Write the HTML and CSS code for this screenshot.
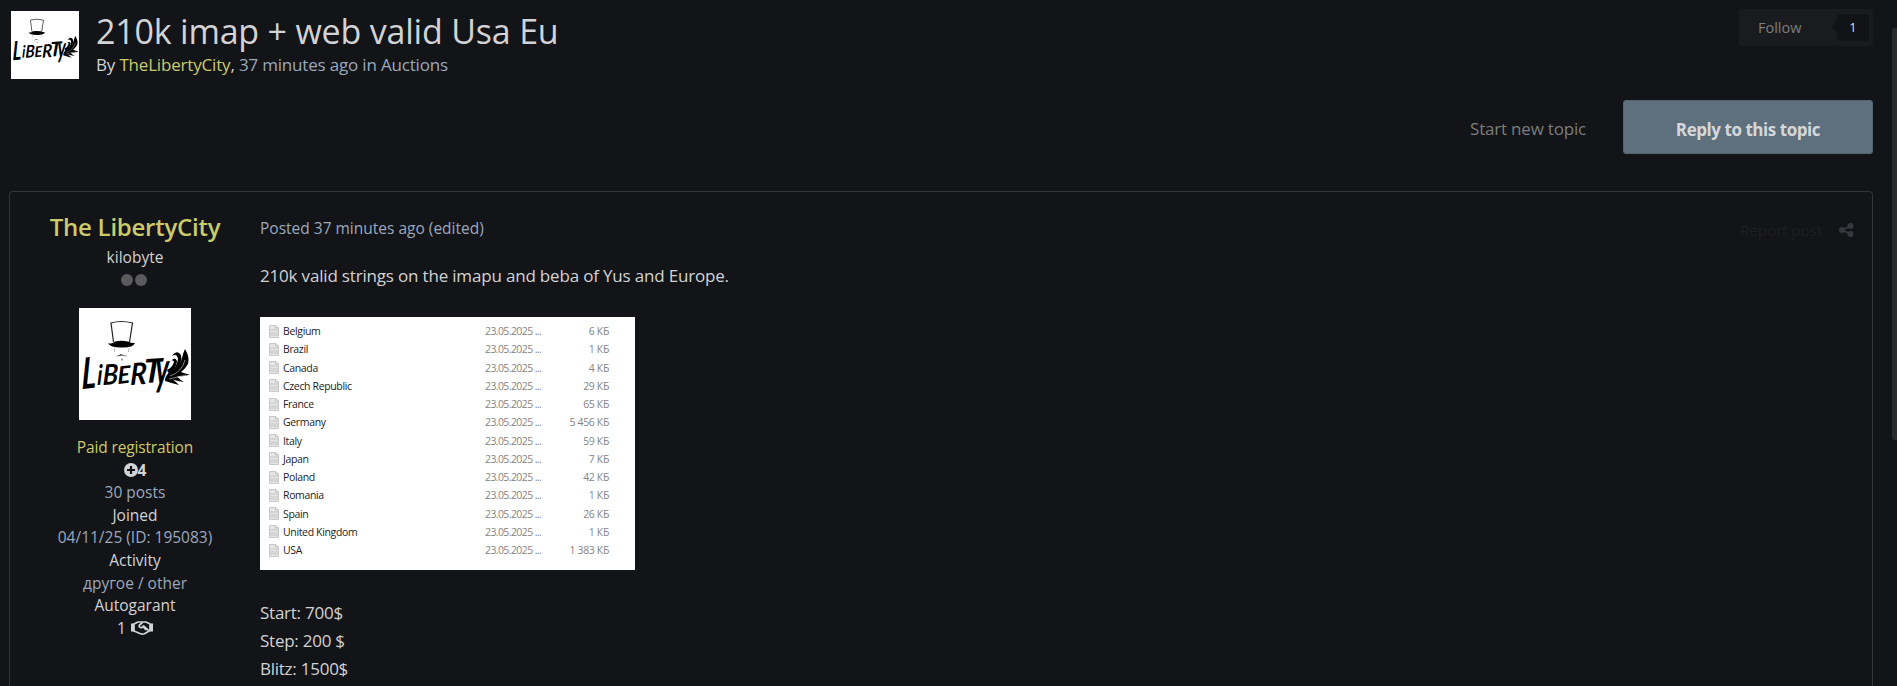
FILE: index.html
```
<!DOCTYPE html>
<html lang="en">
<head>
  <meta charset="UTF-8">
  <title>210k imap + web valid Usa Eu</title>
  <link rel="stylesheet" href="styles.css">
</head>
<body>
  <svg class="sprite" aria-hidden="true">
    <symbol id="logo" viewBox="0 0 112 112">
      <rect width="112" height="112" fill="#fff"/>
      <!-- hat -->
      <path d="M34.500 34L32 15q10-3 21.500 0L50.500 34" fill="none" stroke="#222" stroke-width="1.200"/>
      <path d="M29 35q4 1.500 7-1.500q6-1.500 13 0q4 2 7 1.500q-2 5-14 4.500q-11 0-13-4.500z"/>
      <path d="M35 40l.500 4M50 40l-.500 4" stroke="#aaa" stroke-width=".8"/>
      <path d="M37 48q3-.5 5-2q3 2 7 2q-4 .5-6-.5q-3 1-6 .5zM42.500 50.500h1v2h-1z" fill="#444"/>
      <!-- lettering -->
      <g class="logo-text">
        <text transform="translate(2.500 81) rotate(-5) skewX(-6) scale(.7 1)" font-size="43">L</text>
        <text transform="translate(18 77) rotate(-4) skewX(-6) scale(.75 1)" font-size="28">i</text>
        <text transform="translate(23.500 77) rotate(-4) skewX(-6) scale(.9 1)" font-size="28">B</text>
        <text transform="translate(38.500 76) rotate(-6) skewX(-6) scale(1 1)" font-size="24">E</text>
        <text transform="translate(51 77) rotate(-4) skewX(-6) scale(.92 1)" font-size="30">R</text>
        <text transform="translate(64 75) rotate(-3) skewX(-6) scale(1 1)" font-size="33">T</text>
        <text transform="translate(76 77) rotate(-2) skewX(-4) scale(.72 1.200)" font-size="38">y</text>
      </g>
      <!-- feather -->
      <path d="M86 73Q86 66 93 63Q101 59 103 50Q104 45 106 41Q111 49 109 56Q106 61 102 64Q108 66 111 66.500Q104 69 98 68.500Q101 72 105 74Q98 73 94 71.500Q98 75 100 77Q92 75 86 73z"/>
      <path d="M90 65Q98 60 99 51Q98 45 93 48Q98 41 102 47Q104 55 96 64z"/>
      <path d="M88 62Q93 60 95 54Q94 51 92 53Q96 48 98 53Q98 60 90 66z"/>
      <path d="M91 68Q103 64 106 52M90 71L107 67" stroke="#fff" stroke-width=".5" fill="none"/>
    </symbol>
    <symbol id="file" viewBox="0 0 10 13">
      <path d="M.5.5h6.500l2.500 2.500v9.500h-9z" fill="#e6e6e6" stroke="#c8c8c8"/>
      <path d="M1 5h8M1 8h8M1 10h8M6.500 1v2h3" stroke="#bbb" stroke-width=".8" fill="none"/>
    </symbol>
  </svg>

  <header class="topic-header">
    <svg class="avatar-small"><use href="#logo"/></svg>
    <div class="topic-info">
      <h1>210k imap + web valid Usa Eu</h1>
      <p class="byline">By <a class="gold">TheLibertyCity</a>, <span class="muted">37 minutes ago in Auctions</span></p>
    </div>
    <div class="follow">
      <span>Follow</span>
      <span class="follow-count">1</span>
    </div>
  </header>

  <div class="actions">
    <a class="start-topic">Start new topic</a>
    <a class="reply-btn"><span>Reply to this topic</span></a>
  </div>

  <article class="post">
    <aside class="author">
      <h2>The LibertyCity</h2>
      <div class="rank">kilobyte</div>
      <div class="pips"><i></i><i></i></div>
      <svg class="avatar"><use href="#logo"/></svg>
      <ul>
        <li class="gold group">Paid registration</li>
        <li class="rep"><svg viewBox="0 0 14 14" width="14" height="14"><circle cx="7" cy="7" r="7" fill="#d2d3d4"/><path d="M7 3v8M3 7h8" stroke="#131417" stroke-width="2.200"/></svg>4</li>
        <li class="muted">30 posts</li>
        <li>Joined</li>
        <li class="muted">04/11/25 (ID: 195083)</li>
        <li>Activity</li>
        <li class="muted">другое / other</li>
        <li>Autogarant</li>
        <li class="deals">1 <svg viewBox="0 0 22 14" width="22" height="14" fill="none" stroke="#d2d3d4" stroke-width="1.700" stroke-linejoin="round"><path d="M0 2.500h3v8H0M22 2.500h-3v8h3" fill="#d2d3d4" stroke="none"/><path d="M3 3l4-2h8l4 2v6.500l-5.500 3.200q-2 .8-4 0L3 10z"/><path d="M11.500 1.500L8.500 4q-1 2 1 2.500t3-1.500l5 4.500M12.500 6l2.500 3"/></svg></li>
      </ul>
    </aside>

    <div class="post-main">
      <div class="post-meta">
        <span class="muted posted">Posted 37 minutes ago (edited)</span>
        <span class="report">Report post</span>
        <svg class="share" viewBox="0 0 15 14"><path d="M11.500 3L3 7l8.500 4" fill="none" stroke="#343a40" stroke-width="1.800"/><circle cx="3" cy="7" r="3"/><circle cx="11.500" cy="3" r="3"/><circle cx="11.500" cy="11" r="3"/></svg>
      </div>
      <p class="lead">210k valid strings on the imapu and beba of Yus and Europe.</p>

      <div class="files">
        <div class="file"><svg><use href="#file"/></svg><b>Belgium</b><span>23.05.2025 ...</span><em>6 КБ</em></div>
        <div class="file"><svg><use href="#file"/></svg><b>Brazil</b><span>23.05.2025 ...</span><em>1 КБ</em></div>
        <div class="file"><svg><use href="#file"/></svg><b>Canada</b><span>23.05.2025 ...</span><em>4 КБ</em></div>
        <div class="file"><svg><use href="#file"/></svg><b>Czech Republic</b><span>23.05.2025 ...</span><em>29 КБ</em></div>
        <div class="file"><svg><use href="#file"/></svg><b>France</b><span>23.05.2025 ...</span><em>65 КБ</em></div>
        <div class="file"><svg><use href="#file"/></svg><b>Germany</b><span>23.05.2025 ...</span><em>5 456 КБ</em></div>
        <div class="file"><svg><use href="#file"/></svg><b>Italy</b><span>23.05.2025 ...</span><em>59 КБ</em></div>
        <div class="file"><svg><use href="#file"/></svg><b>Japan</b><span>23.05.2025 ...</span><em>7 КБ</em></div>
        <div class="file"><svg><use href="#file"/></svg><b>Poland</b><span>23.05.2025 ...</span><em>42 КБ</em></div>
        <div class="file"><svg><use href="#file"/></svg><b>Romania</b><span>23.05.2025 ...</span><em>1 КБ</em></div>
        <div class="file"><svg><use href="#file"/></svg><b>Spain</b><span>23.05.2025 ...</span><em>26 КБ</em></div>
        <div class="file"><svg><use href="#file"/></svg><b>United Kingdom</b><span>23.05.2025 ...</span><em>1 КБ</em></div>
        <div class="file"><svg><use href="#file"/></svg><b>USA</b><span>23.05.2025 ...</span><em>1 383 КБ</em></div>
      </div>

      <div class="prices">
        <p>Start: 700$</p>
        <p>Step: 200 $</p>
        <p>Blitz: 1500$</p>
      </div>
    </div>
  </article>

  <div class="scroll-thumb"></div>
</body>
</html>
```

FILE: styles.css
```
* {
  box-sizing: border-box;
}
html {
  overflow: hidden;
}
body {
  margin: 0;
  height: 686px;
  overflow: hidden;
  padding: 9px 24px 0 9px;
  background: #131417;
  color: #d2d3d4;
  font-family: "Open Sans", "Noto Sans", sans-serif;
  font-size: 15px;
}
h1, h2, p, ul {
  margin: 0;
  padding: 0;
  font-weight: 400;
}
svg {
  display: block;
}
.sprite {
  position: absolute;
  width: 0;
  height: 0;
}
.logo-text {
  font-family: Lato, sans-serif;
  font-weight: 700;
  font-style: italic;
}
.gold {
  color: #cbcb6c;
}
.muted {
  color: #9ba8be;
}

/* topic header */
.topic-header {
  display: flex;
  height: 91px;
}
.avatar-small {
  width: 68px;
  height: 68px;
  margin: 2px 17px 0 2px;
}
.topic-info {
  flex: 1;
}
h1 {
  font-size: 34px;
  line-height: 44px;
  letter-spacing: -0.2px;
}
.byline {
  font-size: 17px;
  line-height: 24px;
  letter-spacing: -0.18px;
}
.follow {
  display: flex;
  align-items: center;
  justify-content: space-between;
  width: 134px;
  height: 37px;
  padding: 0 4px 0 19px;
  border-radius: 3px;
  background: #1a1b1f;
  color: #7c7d7e;
  font-size: 14.5px;
}
.follow-count {
  position: relative;
  width: 32px;
  height: 27px;
  border-radius: 3px;
  background: #121316;
  color: #dfe3e6;
  font-size: 12px;
  line-height: 28px;
  text-align: center;
}
.follow-count::before {
  content: "";
  position: absolute;
  left: -5px;
  top: 6px;
  border: 7px solid transparent;
  border-left: 0;
  border-right: 5px solid #121316;
}

/* buttons */
.actions {
  display: flex;
  justify-content: flex-end;
  align-items: center;
  gap: 37px;
  height: 54px;
  margin-bottom: 37px;
}
.start-topic {
  padding-top: 2px;
  color: #7c7d7e;
  font-size: 17px;
  letter-spacing: -0.2px;
}
.reply-btn {
  display: flex;
  align-items: center;
  justify-content: center;
  width: 250px;
  height: 54px;
  padding-top: 4px;
  border: 1px solid #526672;
  border-radius: 3px;
  background: #5e6f7d;
  color: #d6d7d8;
  font-size: 17px;
  font-weight: 700;
  letter-spacing: -0.45px;
}

/* post */
.post {
  display: flex;
  height: 520px;
  border: 1px solid #343538;
  border-bottom: 0;
  border-radius: 4px 4px 0 0;
}
.author {
  width: 250px;
  padding: 19px 0 0;
  text-align: center;
}
h2 {
  color: #cbcb6c;
  font-size: 24px;
  font-weight: 600;
  line-height: 32px;
  letter-spacing: -0.25px;
}
.rank {
  font-size: 15.5px;
  line-height: 28px;
}
.pips {
  display: flex;
  justify-content: center;
  gap: 2px;
  margin: 3px 2px 0 0;
}
.pips i {
  width: 12px;
  height: 12px;
  border-radius: 50%;
  background: #5b5b5c;
}
.avatar {
  width: 112px;
  height: 112px;
  margin: 22px auto 16px;
}
.author ul {
  list-style: none;
}
.author li {
  height: 22.6px;
  font-size: 15.5px;
  line-height: 22.6px;
}
.author .group {
  letter-spacing: -0.15px;
}
.rep, .deals {
  display: flex;
  align-items: center;
  justify-content: center;
}
.author .rep {
  font-weight: 700;
}
.deals {
  gap: 5px;
}
.post-main {
  flex: 1;
  padding: 24px 18px 0 0;
}
.post-meta {
  display: flex;
  align-items: center;
  height: 26px;
}
.posted {
  padding-bottom: 2px;
  font-size: 15.5px;
}
.report {
  margin-left: auto;
  padding-top: 1px;
  color: #1e1f22;
}
.share {
  width: 15px;
  height: 14px;
  margin: 2px 0 0 17px;
  fill: #343a40;
}
.lead {
  margin-top: 20px;
  font-size: 17px;
  line-height: 28px;
  letter-spacing: -0.18px;
}
.files {
  width: 375px;
  height: 253px;
  margin: 27px 0 29px;
  padding: 5px 26px 0 9px;
  background: #fff;
  color: #1d1d1d;
  font-size: 10.5px;
}
.file {
  display: grid;
  grid-template-columns: 14px 202px 60px 1fr;
  align-items: center;
  height: 18.25px;
  letter-spacing: -0.35px;
  white-space: nowrap;
}
.file svg {
  width: 10px;
  height: 13px;
}
.file b {
  font-weight: 400;
}
.file span, .file em {
  color: #858585;
  font-style: normal;
}
.file span {
  letter-spacing: -0.6px;
}
.file em {
  text-align: right;
}
.prices {
  font-size: 17px;
  line-height: 28px;
  letter-spacing: -0.25px;
}

.scroll-thumb {
  position: fixed;
  top: 28px;
  right: 0;
  width: 5px;
  height: 412px;
  border-radius: 3px 0 0 3px;
  background: #292a2a;
}
```
